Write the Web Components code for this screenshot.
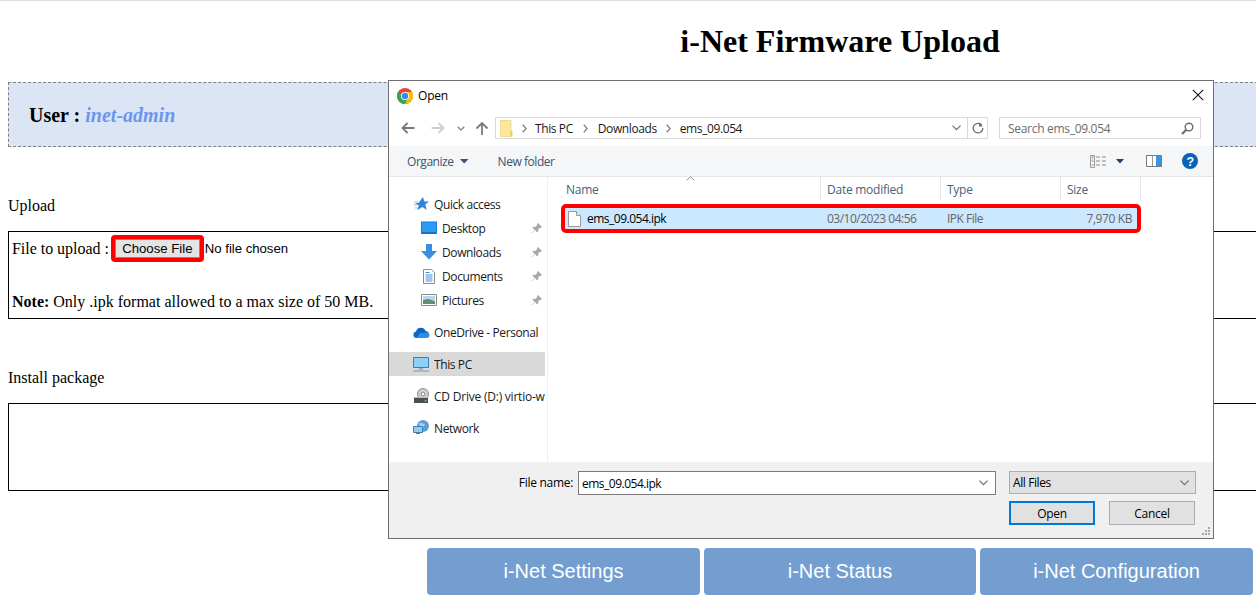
<!DOCTYPE html>
<html lang="en"><head><meta charset="utf-8"><title>i-Net Firmware Upload</title>
<style>
html,body{margin:0;padding:0;overflow:hidden;background:#fff}
</style></head>
<body>
<inet-page>
  <inet-heading>i-Net Firmware Upload</inet-heading>
  <user-bar name="inet-admin"></user-bar>
  <fw-section label="Upload" gap="50">
    <file-row></file-row>
    <div style="margin-top:31px;font:16px/18px 'Liberation Serif',serif"><b>Note:</b> Only .ipk format allowed to a max size of 50 MB.</div>
  </fw-section>
  <fw-section label="Install package" gap="50"></fw-section>
  <nav-row>
    <nav-btn>i-Net Settings</nav-btn>
    <nav-btn>i-Net Status</nav-btn>
    <nav-btn>i-Net Configuration</nav-btn>
  </nav-row>
  <open-dialog slot="over"></open-dialog>
</inet-page>
<script>
function def(name, css, html, init){
  customElements.define(name, class extends HTMLElement{
    connectedCallback(){
      if(this.shadowRoot) return;
      const r=this.attachShadow({mode:'open'});
      r.innerHTML='<style>'+css+'</style>'+(typeof html==='function'?html(this):html);
    }
  });
}
def('inet-page',`:host{display:block;position:relative;width:1256px;height:596px;overflow:hidden;border-top:1px solid #ddd;box-sizing:border-box;color:#000;font:16px 'Liberation Serif',serif}`,`<slot></slot><slot name="over"></slot>`);
def('inet-heading',`:host{display:block;margin:22px 3px 0 427px;text-align:center;font:bold 32px/37px 'Liberation Serif',serif}`,`<slot></slot>`);
def('user-bar',`:host{display:flex;align-items:center;box-sizing:border-box;height:65px;margin:22px -2px 0 8px;padding:1px 0 0 20px;background:#dce5f6;border:1px dashed #808080;font:bold 20px 'Liberation Serif',serif}
i{color:#6c96ee;margin-left:5px}`,h=>`<span>User :</span><i>${h.getAttribute('name')}</i>`);
def('fw-section',`:host{display:block;margin-top:50px}
.l{font:16px/18px 'Liberation Serif',serif;margin:0 0 16px 8px;position:relative}
.b{box-sizing:border-box;height:88px;margin:0 -2px 0 8px;border:1px solid #000;padding:3px}`,h=>`<div class="l">${h.getAttribute('label')}</div><div class="b"><slot></slot></div>`);
def('file-row',`:host{display:flex;align-items:center;height:27px;font:16px 'Liberation Serif',serif;letter-spacing:-.03px}
button{box-sizing:border-box;margin:0 1px 0 2px;height:27px;width:93px;border:4px solid #f00;border-radius:4px;padding:0;background:#e4e4e4;font:13.2px 'Liberation Sans',sans-serif;color:#000;box-shadow:inset 0 0 0 1px #8a8a8a}
span.n{font:13.2px 'Liberation Sans',sans-serif}`,`<span>File to upload :</span><button>Choose File</button><span class="n">No file chosen</span>`);
def('nav-row',`:host{display:grid;grid-template-columns:273px 272px 273px;gap:4px;margin:57px 3px 0 427px;height:47px}`,`<slot></slot>`);
def('nav-btn',`:host{display:flex;align-items:center;justify-content:center;background:#739ecf;color:#fff;border-radius:4px;font:20px 'Liberation Sans',sans-serif}`,`<slot></slot>`);

def('dlg-nav',`:host{display:flex;align-items:center;height:24px;font:12px 'Open Sans',sans-serif;letter-spacing:-.4px;color:#1a1a1a;white-space:nowrap;overflow:hidden;box-sizing:border-box}
:host([sel]){background:#d9d9d9}
.ic{width:20px;height:20px;flex:none;margin-left:var(--ind,22px);margin-right:var(--gap,3px);display:flex;align-items:center;justify-content:center}
.t{flex:1;overflow:hidden}
.p{flex:none;margin-right:2px}`,h=>`<span class="ic"><slot name="ic"></slot></span><span class="t"><slot></slot></span>${h.hasAttribute('pin')?`<svg class="p" width="12" height="12" viewBox="0 0 12 12"><path d="M7 1l4 4-1 1-1-.3-2 2 .2 1.8-1 1-2.3-2.4L1.500 11l-.5-.5 2.800-2.600L1.500 5.700l1-1 1.800.2 2-2L6 2z" fill="#a9a9a9"/></svg>`:''}`);
def('dlg-col',`:host{display:flex;align-items:center;box-sizing:border-box;padding-left:6px;height:24px;border-right:1px solid #e5e5e5;font:12px 'Open Sans',sans-serif;letter-spacing:-.25px;color:#4c607a;white-space:nowrap}`,`<slot></slot>`);
def('dlg-btn',`:host{display:flex;align-items:center;justify-content:center;box-sizing:border-box;width:86px;height:24px;background:#e1e1e1;border:1px solid #adadad;font:12px 'Open Sans',sans-serif;letter-spacing:-.3px;color:#000}
:host([def]){border:2px solid #0078d7}`,`<slot></slot>`);

const chev='<svg width="9" height="6" viewBox="0 0 9 6"><path d="M.5.700l4 4 4-4" fill="none" stroke="#6d6d6d" stroke-width="1.200"/></svg>';
const crumb='<svg width="5" height="9" viewBox="0 0 5 9" style="flex:none"><path d="M.8.800l3.300 3.700L.8 8.200" fill="none" stroke="#808080" stroke-width="1.300"/></svg>';
def('open-dialog',`
:host{position:absolute;left:388px;top:79px;width:826px;height:459px;box-sizing:border-box;border:1px solid #6e6e6e;background:#fff;display:flex;flex-direction:column;font:12px 'Open Sans',sans-serif;letter-spacing:-.4px;color:#1a1a1a}
.title{height:29px;flex:none;display:flex;align-items:center;padding:0 8px 0 8px;gap:5px;color:#000}
.title .sp{flex:1}
.addr{height:36px;flex:none;display:flex;align-items:center}
.navs{display:flex;align-items:center;width:106px;flex:none;padding-left:12px;box-sizing:border-box}
.path{box-sizing:border-box;width:493px;height:22px;border:1px solid #d9d9d9;display:flex;align-items:center;flex:none}
.path span{white-space:nowrap}
.path .end{margin-left:auto;display:flex;align-items:center;height:100%}
.search{box-sizing:border-box;width:202px;height:22px;margin-left:11px;border:1px solid #d9d9d9;display:flex;align-items:center;padding:0 6px 0 8px;color:#6d6d6d;justify-content:space-between;letter-spacing:-.3px}
.tools{height:31px;flex:none;box-sizing:border-box;background:#f5f6f7;border-bottom:1px solid #e6e6e6;display:flex;align-items:center;padding-left:18px;color:#3f5370;letter-spacing:-.45px}
.tools .r{margin-left:auto;display:flex;align-items:center;padding-right:15px}
.main{flex:1;display:flex;min-height:0}
.side{width:159px;flex:none;box-sizing:border-box;border-right:1px solid #f0f0f0;padding:15px 2px 0 0}
.grp{margin-bottom:8px}
.list{flex:1;padding-left:13px;position:relative}
.cols{display:grid;grid-template-columns:260px 120px 120px 80px;height:24px}
.row{box-sizing:border-box;width:580px;height:29px;margin-top:3px;border:4px solid #f00;border-radius:5px;background:#cce8ff;display:grid;grid-template-columns:256px 120px 120px 76px;align-items:center;color:#666;letter-spacing:-.5px}
.row>span{padding-left:6px;white-space:nowrap}
.row .nm{display:flex;align-items:center;gap:6px;padding-left:3px;color:#000}
.row .sz{text-align:right;padding:0 5px 0 0;letter-spacing:-.4px}
.sort{position:absolute;left:138px;top:-1px}
.foot{height:76px;flex:none;box-sizing:border-box;background:#f0f0f0;position:relative;padding:9px 17px 0 0;display:flex;flex-direction:column;gap:7px}
.f1{display:flex;align-items:center;justify-content:flex-end;height:23px;color:#000}
.input{box-sizing:border-box;width:418px;height:24px;margin-left:5px;background:#fff;border:1px solid #7a7a7a;display:flex;align-items:center;justify-content:space-between;padding:1px 7px 0 3px;letter-spacing:-.5px}
.input svg{margin-top:-1px}
.sel{box-sizing:border-box;width:187px;height:23px;margin-left:13px;background:#e1e1e1;border:1px solid #adadad;display:flex;align-items:center;justify-content:space-between;padding:0 6px 0 3px}
.f2{display:flex;justify-content:flex-end;gap:14px;padding-right:1px}
.grip{position:absolute;right:2px;bottom:2px}
`,`
<div class="title">
 <svg width="16" height="16" viewBox="0 0 16 16"><circle cx="8" cy="8" r="8" fill="#ea4335"/><path d="M8 8L1.070 4A8 8 0 0 0 8 16l4-8z" fill="#34a853"/><path d="M8 16a8 8 0 0 0 6.930-12H8l4 4z" fill="#fbbc05"/><circle cx="8" cy="8" r="4" fill="#fff"/><circle cx="8" cy="8" r="3.200" fill="#4285f4"/></svg>
 <span style="letter-spacing:-.2px">Open</span><span class="sp"></span>
 <svg width="12" height="12" viewBox="0 0 12 12" style="margin:0 1px 2px 0"><path d="M.8.800l10.400 10.400M11.200.800L.8 11.200" stroke="#111" stroke-width="1.100" fill="none"/></svg>
</div>
<div class="addr">
 <div class="navs">
  <svg width="14" height="12" viewBox="0 0 14 12"><path d="M13.500 6H2M6.500 1L1.500 6l5 5" fill="none" stroke="#7a7a7a" stroke-width="1.800"/></svg>
  <svg width="14" height="12" viewBox="0 0 14 12" style="margin-left:16px"><path d="M.5 6H12M7.500 1l5 5-5 5" fill="none" stroke="#cfcfcf" stroke-width="1.800"/></svg>
  <svg width="8" height="5" viewBox="0 0 8 5" style="margin-left:12px"><path d="M.7.700L4 4 7.300.7" fill="none" stroke="#8a8a8a" stroke-width="1.300"/></svg>
  <svg width="14" height="14" viewBox="0 0 14 14" style="margin-left:10px"><path d="M7 14V2M1.500 7.500L7 2l5.500 5.500" fill="none" stroke="#7a7a7a" stroke-width="1.800"/></svg>
 </div>
 <div class="path">
  <svg width="13" height="17" viewBox="0 0 13 17" style="margin-left:4px;flex:none"><path d="M0 .5h11v16H0z" fill="#fde79a" stroke="#e7cf86" stroke-width=".7"/><path d="M10.500 11h2v5.500h-2z" fill="#f1c95f"/></svg>
  <span style="margin:0 0 0 9px;display:flex">${crumb}</span>
  <span style="margin:0 0 0 8px">This PC</span>
  <span style="margin:0 0 0 10px;display:flex">${crumb}</span>
  <span style="margin:0 0 0 10px">Downloads</span>
  <span style="margin:0 0 0 9px;display:flex">${crumb}</span>
  <span style="margin:0 0 0 9px">ems_09.054</span>
  <div class="end">
   <span style="margin:0 6px 0 0;display:flex">${chev}</span>
   <div style="width:19px;height:100%;border-left:1px solid #d9d9d9;display:flex;align-items:center;justify-content:center"><svg width="12" height="12" viewBox="0 0 12 12"><path d="M9.800 3.200A4.800 4.800 0 1 0 10.800 6" fill="none" stroke="#6d6d6d" stroke-width="1.300"/><path d="M7 .5v4h4z" fill="#6d6d6d" transform="rotate(10 9 3)"/></svg></div>
  </div>
 </div>
 <div class="search"><span>Search ems_09.054</span><svg width="13" height="13" viewBox="0 0 13 13"><circle cx="8" cy="5" r="3.800" fill="none" stroke="#6d6d6d" stroke-width="1.400"/><path d="M5.300 7.700L1 12" stroke="#6d6d6d" stroke-width="2.200"/></svg></div>
</div>
<div class="tools">
 <span>Organize</span>
 <svg width="9" height="5" viewBox="0 0 9 5" style="margin-left:6px"><path d="M0 0h8.500L4.250 4.500z" fill="#3f5370"/></svg>
 <span style="margin-left:29px">New folder</span>
 <div class="r">
  <svg width="17" height="13" viewBox="0 0 17 13"><path d="M.5.500h4v12h-4z" fill="#fff" stroke="#9a9a9a"/><path d="M1.500 2h2M1.500 6h2M1.500 10h2" stroke="#777"/><path d="M2 4h1" stroke="#c44"/><path d="M6 2h4M6 6h4M6 10h4M12 2h4M12 6h4M12 10h4" stroke="#8a8a8a" stroke-width="1.200"/></svg>
  <svg width="8" height="5" viewBox="0 0 8 5" style="margin-left:9px"><path d="M0 0h8L4 4.500z" fill="#1f3f6b"/></svg>
  <svg width="16" height="12" viewBox="0 0 16 12" style="margin-left:22px"><path d="M.5.500h15v11H.5z" fill="#fff" stroke="#7a7a7a"/><path d="M6.500 1v10" stroke="#9a9a9a"/><path d="M10 1h5v10h-5z" fill="#3f92de"/></svg>
  <svg width="16" height="16" viewBox="0 0 16 16" style="margin-left:20px"><circle cx="8" cy="8" r="8" fill="#0a62b8"/><text x="8" y="12.500" text-anchor="middle" font-family="Liberation Sans" font-weight="bold" font-size="12.500" fill="#fff">?</text></svg>
 </div>
</div>
<div class="main">
 <div class="side">
  <div class="grp">
   <dlg-nav><svg slot="ic" width="15" height="14" viewBox="0 0 15 14"><path d="M9 0l1.300 4.500H15l-3.700 3 1.400 5.500L8.500 10 3.500 13l1.300-4.500L1 6h3.500z" fill="#2f86d8"/><path d="M0 5h4M0 8h3M1 11h3" stroke="#8fc2ee"/></svg>Quick access</dlg-nav>
   <dlg-nav pin style="--ind:30px"><svg slot="ic" width="16" height="14" viewBox="0 0 16 14"><path d="M0 .5h16v12.500H0z" fill="#0f7fe0"/><path d="M1 1.500h14v10H1z" fill="#2d9bf0"/><path d="M1 11.500h14v1H1z" fill="#0b5fae"/></svg>Desktop</dlg-nav>
   <dlg-nav pin style="--ind:30px"><svg slot="ic" width="16" height="16" viewBox="0 0 16 16"><path d="M5 0h6v7h5l-8 8.500L0 7h5z" fill="#3a8ee0"/></svg>Downloads</dlg-nav>
   <dlg-nav pin style="--ind:30px"><svg slot="ic" width="12" height="15" viewBox="0 0 12 15"><path d="M.5.500h8l3 3v11H.5z" fill="#fff" stroke="#8a8a8a"/><path d="M2.500 3.500h4M2.500 6h7M2.500 8h7M2.500 10h7M2.500 12h7" stroke="#3a8ee0"/></svg>Documents</dlg-nav>
   <dlg-nav pin style="--ind:30px"><svg slot="ic" width="16" height="12" viewBox="0 0 16 12"><path d="M.5.500h15v11H.5z" fill="#fff" stroke="#8a8a8a"/><path d="M2 2h12v4H2z" fill="#b8d7ee"/><path d="M2 6l5-1 7 2v3H2z" fill="#5e8f6f"/></svg>Pictures</dlg-nav>
  </div>
  <div class="grp"><dlg-nav><svg slot="ic" width="17" height="11" viewBox="0 0 17 11"><path d="M3.500 11A3.300 3.300 0 0 1 3 4.500 5 5 0 0 1 12.500 4a3.600 3.600 0 0 1 1 7z" fill="#0d66c2"/><path d="M3.500 11h10a3 3 0 0 0 3-3c0-2-3-4-6-2-2-1-6 1-5 3-1 0-2 1-2 2z" fill="#2a8fe6"/></svg>OneDrive - Personal</dlg-nav></div>
  <div class="grp"><dlg-nav sel><svg slot="ic" width="16" height="15" viewBox="0 0 16 15"><path d="M.5.500h15v10H.5z" fill="#8fd0f7" stroke="#3c7fb4"/><path d="M6 11h4v2H6z" fill="#9ab3c8"/><path d="M0 14h16" stroke="#6f99ba"/></svg>This PC</dlg-nav></div>
  <div class="grp"><dlg-nav style="letter-spacing:-.22px"><svg slot="ic" width="16" height="16" viewBox="0 0 16 16"><circle cx="10" cy="6" r="5.500" fill="#cfcfcf" stroke="#8e8e8e"/><circle cx="10" cy="6" r="1.800" fill="#fff" stroke="#8e8e8e"/><path d="M1 10h14v5H1z" fill="#4e4e4e"/><path d="M0 10l1-1h14l1 1z" fill="#bdbdbd"/><path d="M11.500 12h2v1.500h-2z" fill="#4fd14f"/></svg>CD Drive (D:) virtio-w</dlg-nav></div>
  <div class="grp"><dlg-nav><svg slot="ic" width="16" height="16" viewBox="0 0 16 16"><circle cx="10" cy="6" r="6" fill="#5a9fd8"/><path d="M6 3c3-1 4 1 6 1l-2 4-3-1z" fill="#a9cfe8"/><path d="M.5 6.500h9v6h-9z" fill="#8fcdf2" stroke="#3f7fb0"/><path d="M3 13.500h4M5 12.500v1" stroke="#4f7f9f"/></svg>Network</dlg-nav></div>
 </div>
 <div class="list">
  <svg class="sort" width="9" height="5" viewBox="0 0 9 5"><path d="M.7 4.300L4.500.8l3.800 3.500" fill="none" stroke="#8a8a8a"/></svg>
  <div class="cols"><dlg-col style="padding-left:5px">Name</dlg-col><dlg-col>Date modified</dlg-col><dlg-col>Type</dlg-col><dlg-col>Size</dlg-col></div>
  <div class="row">
   <span class="nm"><svg width="13" height="16" viewBox="0 0 13 16"><path d="M.5.500h8l4 4v11H.5z" fill="#fff" stroke="#9a9a9a"/><path d="M8.500.5v4h4" fill="#eee" stroke="#9a9a9a"/></svg>ems_09.054.ipk</span>
   <span>03/10/2023 04:56</span><span>IPK File</span><span class="sz">7,970 KB</span>
  </div>
 </div>
</div>
<div class="foot">
 <div class="f1"><span style="letter-spacing:-.3px">File name:</span><div class="input"><span>ems_09.054.ipk</span>${chev}</div><div class="sel"><span>All Files</span>${chev}</div></div>
 <div class="f2"><dlg-btn def>Open</dlg-btn><dlg-btn>Cancel</dlg-btn></div>
 <svg class="grip" width="9" height="9" viewBox="0 0 9 9" fill="#a8a8a8"><rect x="6" y="0" width="2" height="2"/><rect x="3" y="3" width="2" height="2"/><rect x="6" y="3" width="2" height="2"/><rect x="0" y="6" width="2" height="2"/><rect x="3" y="6" width="2" height="2"/><rect x="6" y="6" width="2" height="2"/></svg>
</div>
`);
</script>
</body></html>
